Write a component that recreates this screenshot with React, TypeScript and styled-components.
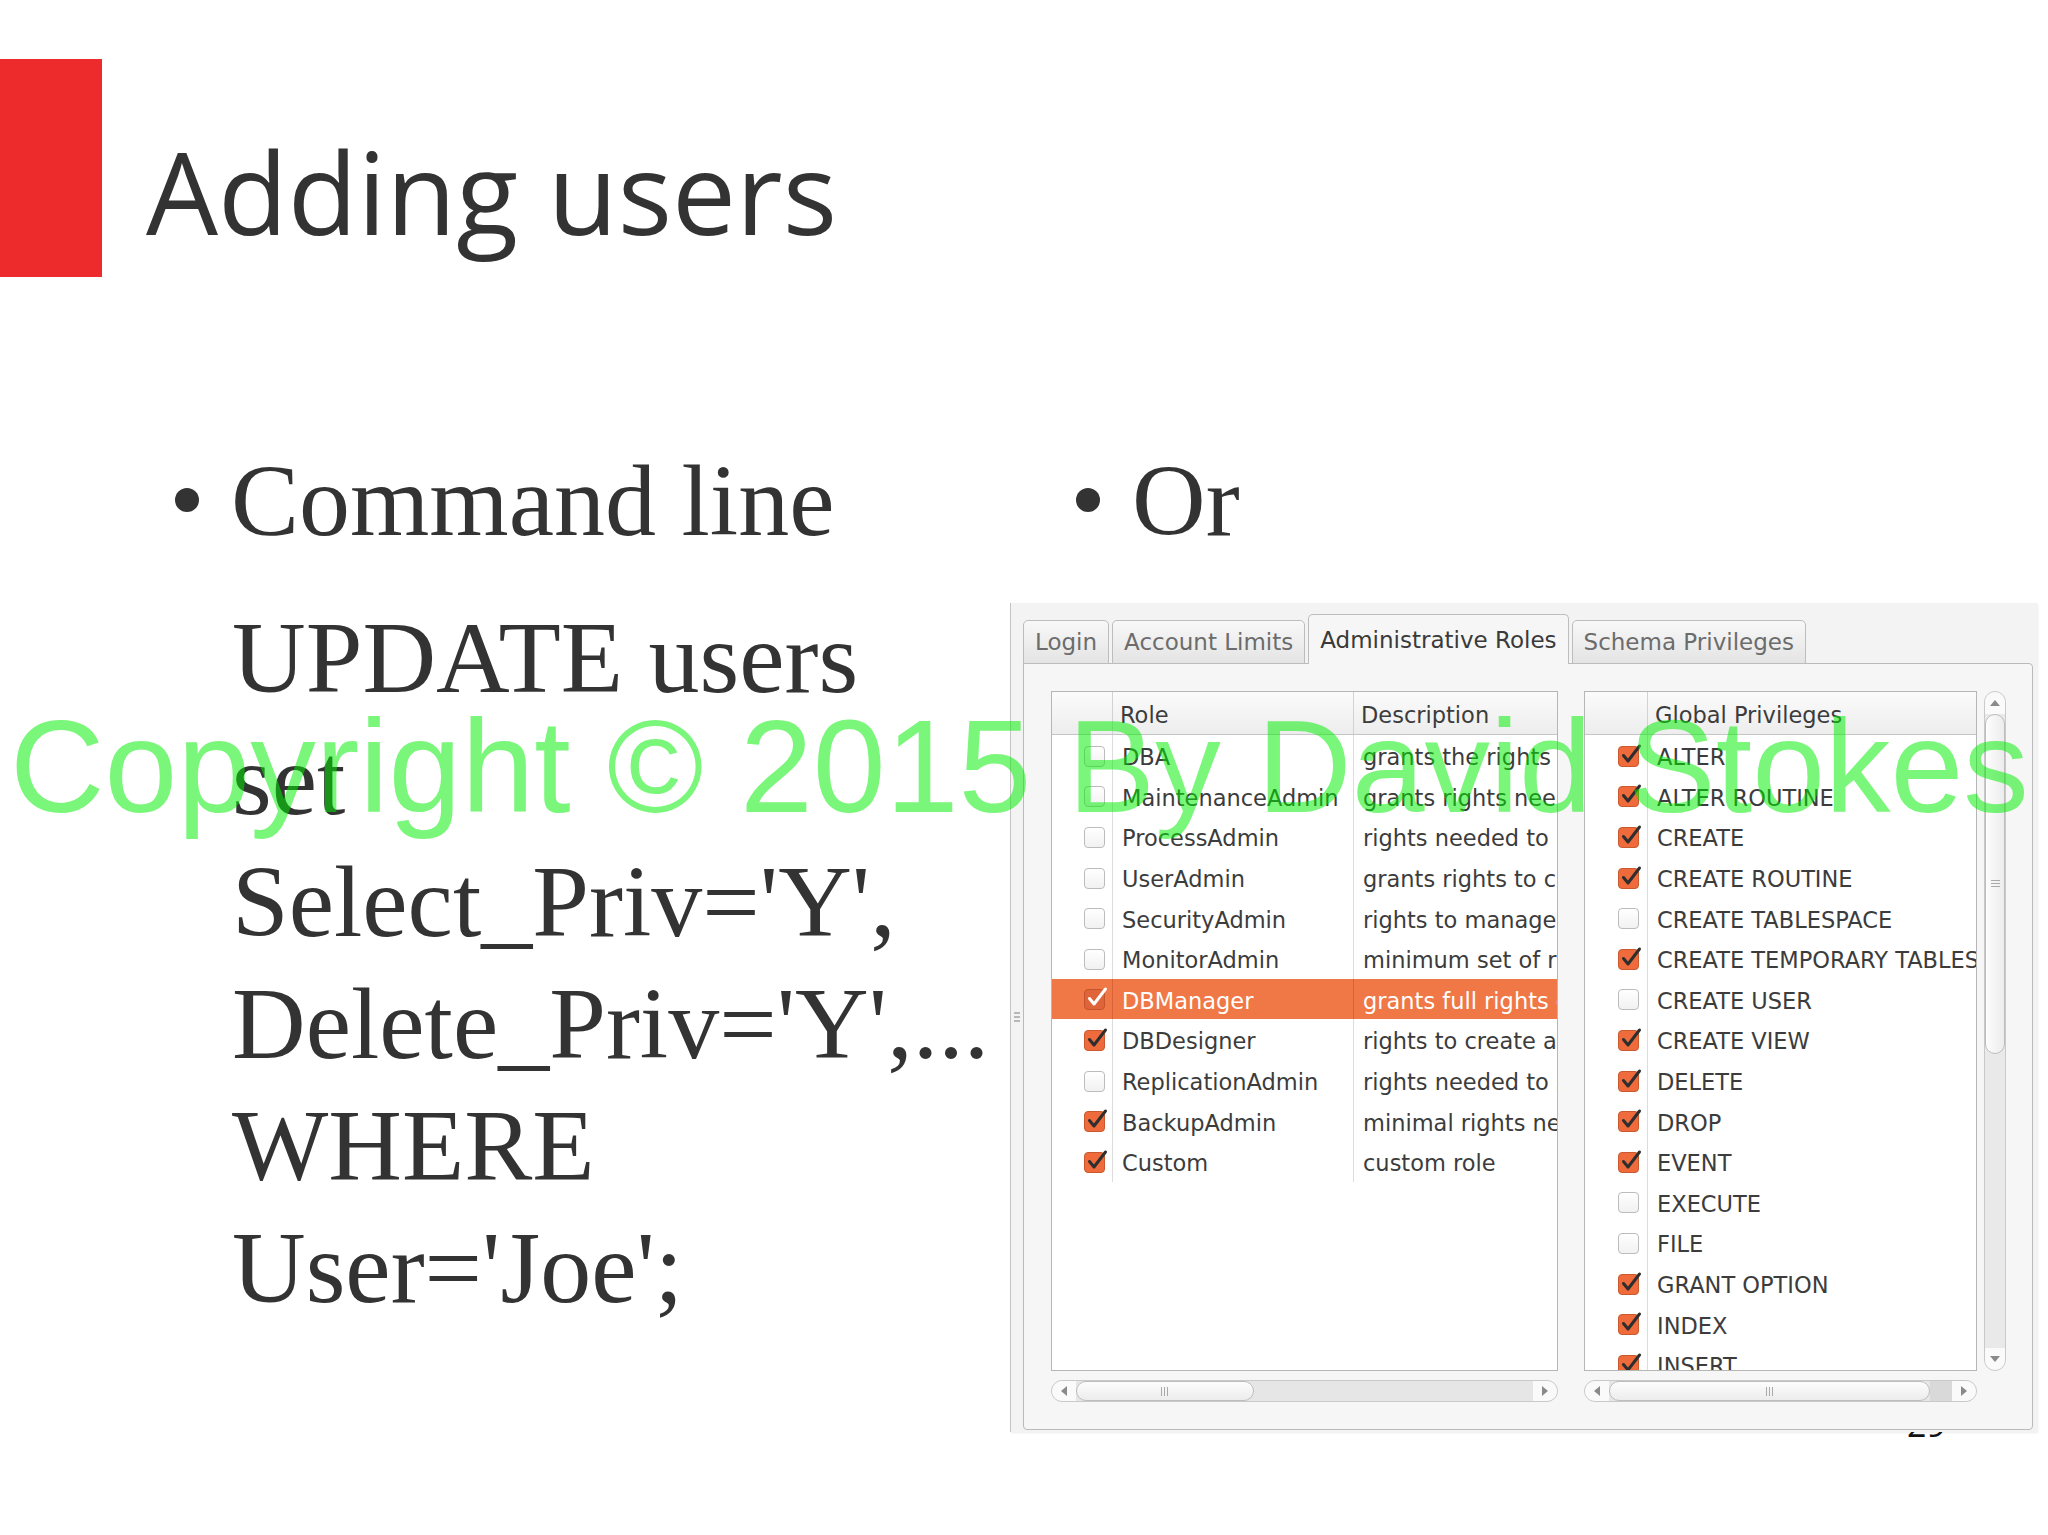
import React from 'react';
import styled, { createGlobalStyle } from 'styled-components';

const GlobalStyle = createGlobalStyle`
  html, body {
    margin: 0;
    padding: 0;
    background: #ffffff;
  }
  body {
    width: 2048px;
    height: 1535px;
    overflow: hidden;
  }
`;

const Slide = styled.div`
  position: relative;
  width: 2048px;
  height: 1535px;
  padding-top: 59px;
  box-sizing: border-box;
  background: #ffffff;
  overflow: hidden;
`;

const Header = styled.header`
  display: flex;
  height: 218px;
`;

const RedBar = styled.div`
  width: 102px;
  flex: none;
  background: #ed2a2c;
`;

const Title = styled.h1`
  margin: 0 0 0 44px;
  padding-top: 75px;
  font-family: 'Open Sans', 'Noto Sans', sans-serif;
  font-weight: 400;
  font-size: 114px;
  line-height: 114px;
  color: #333333;
`;

const Body = styled.main`
  display: grid;
  grid-template-columns: 833px 1fr;
  margin-top: 163px;
  padding-left: 177px;
`;

const Column = styled.div`
  display: flex;
  flex-direction: column;
`;

const BulletRow = styled.div<{ $indent?: number }>`
  display: flex;
  align-items: flex-start;
  padding-left: ${(p) => p.$indent ?? 0}px;
  font-family: 'Liberation Serif', 'Times New Roman', serif;
  font-size: 102px;
  line-height: 122px;
  color: #333333;
`;

const Dot = styled.span`
  display: block;
  width: 24px;
  height: 24px;
  margin: 48px 32px 0 -2px;
  border-radius: 50%;
  background: #333333;
  flex: none;
`;

const CodeBlock = styled.div`
  margin-top: 35px;
  padding-left: 55px;
  font-family: 'Liberation Serif', 'Times New Roman', serif;
  font-size: 102px;
  line-height: 122px;
  color: #333333;
`;

const CodeLine = styled.div`
  white-space: nowrap;
`;

/* ---- screenshot of the Workbench dialog ---- */

const Screenshot = styled.div`
  position: relative;
  z-index: 1;
  display: flex;
  margin-top: 41px;
  width: 1027px;
  height: 829px;
  background: #f3f3f3;
  box-shadow: 1px 1px 2px rgba(0, 0, 0, 0.08);
`;

const Splitter = styled.div`
  width: 12px;
  flex: none;
  border-left: 1px solid #c4c4c4;
  display: flex;
  align-items: center;
  justify-content: center;
`;

const Grip = styled.span`
  width: 6px;
  height: 12px;
  background: repeating-linear-gradient(#b8b8b8 0 2px, transparent 2px 4px);
`;

const TabWidget = styled.div`
  flex: 1;
  display: flex;
  flex-direction: column;
  padding: 11px 4px 2px 0;
  font-family: 'DejaVu Sans', 'Liberation Sans', sans-serif;
  font-size: 22.5px;
`;

const TabBar = styled.div`
  display: flex;
  align-items: flex-end;
  gap: 3px;
  height: 50px;
  margin-bottom: -1px;
  position: relative;
  z-index: 1;
`;

const Tab = styled.div<{ $active?: boolean }>`
  display: flex;
  align-items: center;
  box-sizing: border-box;
  height: ${(p) => (p.$active ? 50 : 44)}px;
  padding: 0 11px;
  border: 1px solid #bdbdbd;
  border-bottom: ${(p) => (p.$active ? 'none' : '1px solid #bdbdbd')};
  border-radius: 5px 5px 0 0;
  background: ${(p) =>
    p.$active ? '#f6f6f6' : 'linear-gradient(#f8f8f8, #e4e4e4)'};
  color: ${(p) => (p.$active ? '#3a3a3a' : '#6c6c6c')};
  font-size: 23px;
  white-space: nowrap;
`;

const Pane = styled.div`
  flex: 1;
  display: flex;
  align-items: flex-start;
  gap: 26px;
  padding: 27px 26px 0 27px;
  border: 1px solid #bababa;
  border-radius: 0 4px 4px 4px;
  background: #f6f6f6;
`;

const Group = styled.div<{ $width: number }>`
  width: ${(p) => p.$width}px;
  display: flex;
  flex-direction: column;
  gap: 9px;
`;

const TableRow = styled.div`
  display: flex;
  gap: 7px;
`;

const Table = styled.div<{ $grow?: boolean }>`
  flex: ${(p) => (p.$grow ? '1' : 'none')};
  height: 680px;
  box-sizing: border-box;
  border: 1px solid #b6b6b6;
  background: #ffffff;
  overflow: hidden;
  color: #3c3c3c;
`;

const HeadRow = styled.div<{ $cols: string }>`
  display: grid;
  grid-template-columns: ${(p) => p.$cols};
  height: 42px;
  border-bottom: 1px solid #c6c6c6;
  background: linear-gradient(#fbfbfb, #ededed);
`;

const HeadCell = styled.div<{ $first?: boolean }>`
  display: flex;
  align-items: center;
  padding: 4px 0 0 7px;
  border-left: ${(p) => (p.$first ? 'none' : '1px solid #d2d2d2')};
  white-space: nowrap;
  overflow: hidden;
`;

const Row = styled.div<{ $cols: string; $selected?: boolean }>`
  display: grid;
  grid-template-columns: ${(p) => p.$cols};
  height: 40.6px;
  background: ${(p) => (p.$selected ? '#f07746' : 'transparent')};
  color: ${(p) => (p.$selected ? '#ffffff' : '#3c3c3c')};
`;

const CheckCell = styled.div<{ $pad: number }>`
  display: flex;
  align-items: center;
  justify-content: flex-end;
  padding: 2px ${(p) => p.$pad}px 0 0;
`;

const TextCell = styled.div<{ $selected?: boolean }>`
  display: flex;
  align-items: center;
  padding: 4px 0 0 9px;
  border-left: 1px solid ${(p) => (p.$selected ? '#d9643a' : '#dcdcdc')};
  white-space: nowrap;
  overflow: hidden;
`;

const Box = styled.span<{ $checked?: boolean; $selected?: boolean }>`
  position: relative;
  width: 21px;
  height: 21px;
  box-sizing: border-box;
  border-radius: 4px;
  border: 1px solid
    ${(p) => (p.$checked ? (p.$selected ? '#c4542c' : '#c95a30') : '#bcbcbc')};
  background: ${(p) =>
    p.$checked
      ? p.$selected
        ? '#e0643a'
        : '#ef6b3c'
      : 'linear-gradient(#ffffff, #f1f1f1)'};

  svg {
    position: absolute;
    left: 1px;
    top: -4px;
    overflow: visible;
  }
`;

const VScroll = styled.div`
  width: 22px;
  height: 680px;
  box-sizing: border-box;
  border: 1px solid #c9c9c9;
  border-radius: 11px;
  background: #e9e9e9;
  display: flex;
  flex-direction: column;
  overflow: hidden;
`;

const HScroll = styled.div<{ $width: number }>`
  width: ${(p) => p.$width}px;
  height: 22px;
  box-sizing: border-box;
  border: 1px solid #c9c9c9;
  border-radius: 11px;
  background: #e6e6e6;
  display: flex;
  overflow: hidden;
`;

const ArrowButton = styled.div<{ $vertical?: boolean }>`
  flex: none;
  width: ${(p) => (p.$vertical ? '100%' : '24px')};
  height: ${(p) => (p.$vertical ? '22px' : '100%')};
  display: flex;
  align-items: center;
  justify-content: center;
  background: #fafafa;
`;

const Thumb = styled.div<{ $size: number; $vertical?: boolean }>`
  flex: none;
  box-sizing: border-box;
  ${(p) => (p.$vertical ? `height: ${p.$size}px;` : `width: ${p.$size}px;`)}
  border: 1px solid #bdbdbd;
  border-radius: 11px;
  background: ${(p) =>
    p.$vertical
      ? 'linear-gradient(90deg, #fdfdfd, #ececec)'
      : 'linear-gradient(#fdfdfd, #ececec)'};
  display: flex;
  align-items: center;
  justify-content: center;
`;

const Track = styled.div<{ $shade?: string }>`
  flex: 1;
  background: ${(p) => p.$shade ?? 'transparent'};
`;

const ThumbGrip = styled.span<{ $vertical?: boolean }>`
  width: ${(p) => (p.$vertical ? '9px' : '8px')};
  height: ${(p) => (p.$vertical ? '8px' : '9px')};
  background: ${(p) =>
    p.$vertical
      ? 'repeating-linear-gradient(#a9a9a9 0 1px, transparent 1px 3px)'
      : 'repeating-linear-gradient(90deg, #a9a9a9 0 1px, transparent 1px 3px)'};
`;

const PageNumber = styled.div`
  position: absolute;
  left: 1907px;
  top: 1407px;
  z-index: 0;
  font-family: 'Open Sans', 'Noto Sans', sans-serif;
  font-size: 34px;
  line-height: 34px;
  color: #111111;
`;

const Watermark = styled.div`
  position: absolute;
  left: 10px;
  top: 701px;
  z-index: 2;
  font-family: 'Liberation Sans', Arial, sans-serif;
  font-size: 131px;
  line-height: 131px;
  color: rgba(0, 238, 0, 0.52);
  white-space: nowrap;
  pointer-events: none;
`;

const Check: React.FC<{ checked: boolean; selected?: boolean }> = ({
  checked,
  selected,
}) => (
  <Box $checked={checked} $selected={selected}>
    {checked && (
      <svg width="22" height="22" viewBox="0 0 22 22">
        <path
          d="M3.5 12.5 L8 18 L19.5 3"
          fill="none"
          stroke={selected ? '#ffffff' : '#2e2e2e'}
          strokeWidth="3"
          strokeLinecap="round"
          strokeLinejoin="round"
        />
      </svg>
    )}
  </Box>
);

const Arrow: React.FC<{ dir: 'up' | 'down' | 'left' | 'right' }> = ({ dir }) => {
  const pts = {
    up: '0,6 5,0 10,6',
    down: '0,0 10,0 5,6',
    left: '6,0 6,10 0,5',
    right: '0,0 6,5 0,10',
  }[dir];
  const vertical = dir === 'up' || dir === 'down';
  return (
    <svg width={vertical ? 10 : 6} height={vertical ? 6 : 10}>
      <polygon points={pts} fill="#8a8a8a" />
    </svg>
  );
};

const roles = [
  { name: 'DBA', desc: 'grants the rights to perform all tasks', on: false },
  { name: 'MaintenanceAdmin', desc: 'grants rights needed to maintain server', on: false },
  { name: 'ProcessAdmin', desc: 'rights needed to assess, monitor, and kill any user process', on: false },
  { name: 'UserAdmin', desc: 'grants rights to create users logins and reset passwords', on: false },
  { name: 'SecurityAdmin', desc: 'rights to manage logins and grant and revoke privileges', on: false },
  { name: 'MonitorAdmin', desc: 'minimum set of rights needed to monitor server', on: false },
  { name: 'DBManager', desc: 'grants full rights on all databases', on: true, selected: true },
  { name: 'DBDesigner', desc: 'rights to create and reverse engineer any database schema', on: true },
  { name: 'ReplicationAdmin', desc: 'rights needed to setup and manage replication', on: false },
  { name: 'BackupAdmin', desc: 'minimal rights needed to backup any database', on: true },
  { name: 'Custom', desc: 'custom role', on: true },
];

const privileges: [string, boolean][] = [
  ['ALTER', true],
  ['ALTER ROUTINE', true],
  ['CREATE', true],
  ['CREATE ROUTINE', true],
  ['CREATE TABLESPACE', false],
  ['CREATE TEMPORARY TABLES', true],
  ['CREATE USER', false],
  ['CREATE VIEW', true],
  ['DELETE', true],
  ['DROP', true],
  ['EVENT', true],
  ['EXECUTE', false],
  ['FILE', false],
  ['GRANT OPTION', true],
  ['INDEX', true],
  ['INSERT', true],
];

const roleCols = '60px 241px 1fr';
const privCols = '62px 1fr';

const App: React.FC = () => {
  return (
    <>
      <GlobalStyle />
      <Slide>
        <Header>
          <RedBar />
          <Title>Adding users</Title>
        </Header>

        <Body>
          <Column>
            <BulletRow>
              <Dot />
              Command line
            </BulletRow>
            <CodeBlock>
              <CodeLine>UPDATE users</CodeLine>
              <CodeLine>set</CodeLine>
              <CodeLine>Select_Priv='Y',</CodeLine>
              <CodeLine>Delete_Priv='Y',...</CodeLine>
              <CodeLine>WHERE</CodeLine>
              <CodeLine>User='Joe';</CodeLine>
            </CodeBlock>
          </Column>

          <Column>
            <BulletRow $indent={68}>
              <Dot />
              Or
            </BulletRow>
            <Screenshot>
              <Splitter>
                <Grip />
              </Splitter>
              <TabWidget>
                <TabBar>
                  <Tab>Login</Tab>
                  <Tab>Account Limits</Tab>
                  <Tab $active>Administrative Roles</Tab>
                  <Tab>Schema Privileges</Tab>
                </TabBar>
                <Pane>
                  <Group $width={507}>
                    <Table>
                      <HeadRow $cols={roleCols}>
                        <HeadCell $first />
                        <HeadCell>Role</HeadCell>
                        <HeadCell>Description</HeadCell>
                      </HeadRow>
                      {roles.map((r) => (
                        <Row key={r.name} $cols={roleCols} $selected={r.selected}>
                          <CheckCell $pad={7}>
                            <Check checked={r.on} selected={r.selected} />
                          </CheckCell>
                          <TextCell $selected={r.selected}>{r.name}</TextCell>
                          <TextCell $selected={r.selected}>{r.desc}</TextCell>
                        </Row>
                      ))}
                    </Table>
                    <HScroll $width={507}>
                      <ArrowButton>
                        <Arrow dir="left" />
                      </ArrowButton>
                      <Thumb $size={178}>
                        <ThumbGrip />
                      </Thumb>
                      <Track />
                      <ArrowButton>
                        <Arrow dir="right" />
                      </ArrowButton>
                    </HScroll>
                  </Group>

                  <Group $width={422}>
                    <TableRow>
                      <Table $grow>
                        <HeadRow $cols={privCols}>
                          <HeadCell $first />
                          <HeadCell>Global Privileges</HeadCell>
                        </HeadRow>
                        {privileges.map(([name, on]) => (
                          <Row key={name} $cols={privCols}>
                            <CheckCell $pad={8}>
                              <Check checked={on} />
                            </CheckCell>
                            <TextCell>{name}</TextCell>
                          </Row>
                        ))}
                      </Table>
                      <VScroll>
                        <ArrowButton $vertical>
                          <Arrow dir="up" />
                        </ArrowButton>
                        <Thumb $vertical $size={340}>
                          <ThumbGrip $vertical />
                        </Thumb>
                        <Track />
                        <ArrowButton $vertical>
                          <Arrow dir="down" />
                        </ArrowButton>
                      </VScroll>
                    </TableRow>
                    <HScroll $width={393}>
                      <ArrowButton>
                        <Arrow dir="left" />
                      </ArrowButton>
                      <Thumb $size={321}>
                        <ThumbGrip />
                      </Thumb>
                      <Track $shade="#d9d9d9" />
                      <ArrowButton>
                        <Arrow dir="right" />
                      </ArrowButton>
                    </HScroll>
                  </Group>
                </Pane>
              </TabWidget>
            </Screenshot>
          </Column>
        </Body>

        <PageNumber>29</PageNumber>
        <Watermark>Copyright © 2015 By David Stokes</Watermark>
      </Slide>
    </>
  );
};

export default App;
